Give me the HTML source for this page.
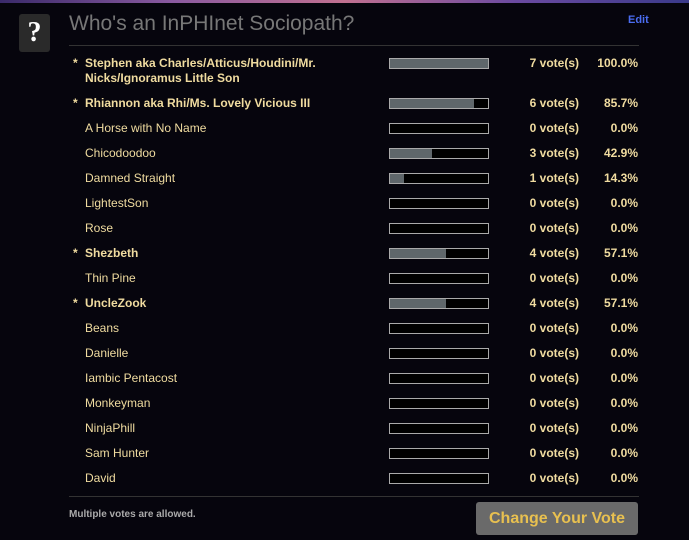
<!DOCTYPE html>
<html><head><style>
body{margin:0;width:689px;height:540px;background:#06050d;font-family:"Liberation Sans",sans-serif;overflow:hidden;position:relative}
.top{position:absolute;left:0;top:0;width:689px;height:3px;background:linear-gradient(90deg,#3a2a6a,#8a5aa0,#c07090,#6a4aa0,#3a3a8a)}
.q{position:absolute;left:19px;top:14px;width:31px;height:38px;background:#2a2a2a;border-radius:3px;color:#fff;font:bold 28px "Liberation Serif",serif;text-align:center;line-height:38px}
h1{position:absolute;left:69px;top:12px;margin:0;font-weight:normal;font-size:21px;color:#777}
.edit{position:absolute;left:628px;top:14px;font-size:11px;color:#4a6cf0;font-weight:bold}
.hr{position:absolute;left:69px;width:570px;height:1px;background:#333}
.row{position:absolute;left:69px;width:570px;font-size:12px;color:#f0dca0;font-weight:bold}
.st{position:absolute;left:4px}
.nm{position:absolute;left:16px;width:260px;line-height:15px}
.bar{position:absolute;left:320px;width:98px;height:9px;border:1px solid #aaa;background:#000}
.bar i{display:block;height:100%;background:#5f676b}
.v{position:absolute;right:60px}
.p{position:absolute;right:1px}
.mv{position:absolute;left:69px;top:509px;font-size:10px;color:#aaa;font-weight:bold}
.btn{position:absolute;left:476px;top:502px;width:162px;height:33px;background:#6a6a6a;border-radius:3px;color:#e8c050;font-weight:bold;font-size:16px;text-align:center;line-height:33px}
</style></head><body>
<div class="top"></div>
<div class="q">?</div>
<h1>Who's an InPHInet Sociopath?</h1>
<div class="edit">Edit</div>
<div class="hr" style="top:45px"></div>
<div class="row" style="top:56px"><span class="st">*</span><span class="nm">Stephen aka Charles/Atticus/Houdini/Mr. Nicks/Ignoramus Little Son</span><div class="bar" style="top:2px"><i style="width:100%"></i></div><span class="v">7 vote(s)</span><span class="p">100.0%</span></div>
<div class="row" style="top:96px"><span class="st">*</span><span class="nm">Rhiannon aka Rhi/Ms. Lovely Vicious III</span><div class="bar" style="top:2px"><i style="width:85.7%"></i></div><span class="v">6 vote(s)</span><span class="p">85.7%</span></div>
<div class="row" style="top:121px;font-weight:normal"><span class="nm">A Horse with No Name</span><div class="bar" style="top:2px"></div><span class="v" style="font-weight:bold">0 vote(s)</span><span class="p" style="font-weight:bold">0.0%</span></div>
<div class="row" style="top:146px;font-weight:normal"><span class="nm">Chicodoodoo</span><div class="bar" style="top:2px"><i style="width:42.9%"></i></div><span class="v" style="font-weight:bold">3 vote(s)</span><span class="p" style="font-weight:bold">42.9%</span></div>
<div class="row" style="top:171px;font-weight:normal"><span class="nm">Damned Straight</span><div class="bar" style="top:2px"><i style="width:14.3%"></i></div><span class="v" style="font-weight:bold">1 vote(s)</span><span class="p" style="font-weight:bold">14.3%</span></div>
<div class="row" style="top:196px;font-weight:normal"><span class="nm">LightestSon</span><div class="bar" style="top:2px"></div><span class="v" style="font-weight:bold">0 vote(s)</span><span class="p" style="font-weight:bold">0.0%</span></div>
<div class="row" style="top:221px;font-weight:normal"><span class="nm">Rose</span><div class="bar" style="top:2px"></div><span class="v" style="font-weight:bold">0 vote(s)</span><span class="p" style="font-weight:bold">0.0%</span></div>
<div class="row" style="top:246px"><span class="st">*</span><span class="nm">Shezbeth</span><div class="bar" style="top:2px"><i style="width:57.1%"></i></div><span class="v">4 vote(s)</span><span class="p">57.1%</span></div>
<div class="row" style="top:271px;font-weight:normal"><span class="nm">Thin Pine</span><div class="bar" style="top:2px"></div><span class="v" style="font-weight:bold">0 vote(s)</span><span class="p" style="font-weight:bold">0.0%</span></div>
<div class="row" style="top:296px"><span class="st">*</span><span class="nm">UncleZook</span><div class="bar" style="top:2px"><i style="width:57.1%"></i></div><span class="v">4 vote(s)</span><span class="p">57.1%</span></div>
<div class="row" style="top:321px;font-weight:normal"><span class="nm">Beans</span><div class="bar" style="top:2px"></div><span class="v" style="font-weight:bold">0 vote(s)</span><span class="p" style="font-weight:bold">0.0%</span></div>
<div class="row" style="top:346px;font-weight:normal"><span class="nm">Danielle</span><div class="bar" style="top:2px"></div><span class="v" style="font-weight:bold">0 vote(s)</span><span class="p" style="font-weight:bold">0.0%</span></div>
<div class="row" style="top:371px;font-weight:normal"><span class="nm">Iambic Pentacost</span><div class="bar" style="top:2px"></div><span class="v" style="font-weight:bold">0 vote(s)</span><span class="p" style="font-weight:bold">0.0%</span></div>
<div class="row" style="top:396px;font-weight:normal"><span class="nm">Monkeyman</span><div class="bar" style="top:2px"></div><span class="v" style="font-weight:bold">0 vote(s)</span><span class="p" style="font-weight:bold">0.0%</span></div>
<div class="row" style="top:421px;font-weight:normal"><span class="nm">NinjaPhill</span><div class="bar" style="top:2px"></div><span class="v" style="font-weight:bold">0 vote(s)</span><span class="p" style="font-weight:bold">0.0%</span></div>
<div class="row" style="top:446px;font-weight:normal"><span class="nm">Sam Hunter</span><div class="bar" style="top:2px"></div><span class="v" style="font-weight:bold">0 vote(s)</span><span class="p" style="font-weight:bold">0.0%</span></div>
<div class="row" style="top:471px;font-weight:normal"><span class="nm">David</span><div class="bar" style="top:2px"></div><span class="v" style="font-weight:bold">0 vote(s)</span><span class="p" style="font-weight:bold">0.0%</span></div>
<div class="hr" style="top:496px"></div>
<div class="mv">Multiple votes are allowed.</div>
<div class="btn">Change Your Vote</div>
</body></html>
